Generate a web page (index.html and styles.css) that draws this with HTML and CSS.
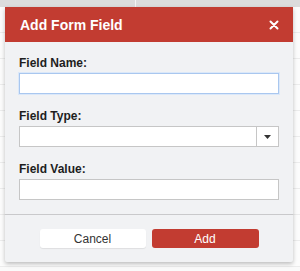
FILE: index.html
```
<!DOCTYPE html>
<html lang="en">
<head>
    <meta charset="UTF-8">
    <title>Add Form Field</title>
    <link rel="stylesheet" href="styles.css">
</head>
<body>
    <div class="table">
        <div class="table-head">
            <div class="th">Field</div>
            <div class="th th-value">Value</div>
        </div>
        <div class="row"></div>
        <div class="row"></div>
        <div class="row"></div>
        <div class="row"></div>
        <div class="row"></div>
        <div class="row"></div>
        <div class="row"></div>
        <div class="row"></div>
        <div class="row"></div>
        <div class="row"></div>
    </div>

    <div class="modal">
        <div class="modal-header">
            <span class="modal-title">Add Form Field</span>
            <span class="modal-close">
                <svg width="10" height="10" viewBox="0 0 10 10">
                    <path d="M1.5 1.5 L8.5 8.5 M8.5 1.5 L1.5 8.5" stroke="#fff" stroke-width="2" stroke-linecap="round"/>
                </svg>
            </span>
        </div>

        <div class="modal-body">
            <div class="field">
                <label class="label">Field Name:</label>
                <input class="input input-focus" type="text">
            </div>
            <div class="field">
                <label class="label">Field Type:</label>
                <div class="select">
                    <div class="select-value"></div>
                    <div class="select-arrow">
                        <svg width="7" height="4" viewBox="0 0 7 4"><path d="M0 0 H7 L3.5 4 Z" fill="#333"/></svg>
                    </div>
                </div>
            </div>
            <div class="field">
                <label class="label">Field Value:</label>
                <input class="input" type="text">
            </div>
        </div>

        <div class="modal-footer">
            <button class="btn btn-cancel">Cancel</button>
            <button class="btn btn-add">Add</button>
        </div>
    </div>
</body>
</html>
```

FILE: styles.css
```
body {
    margin: 0;
    font-family: "Liberation Sans", Arial, sans-serif;
    background-color: #fafafa;
    width: 300px;
    height: 271px;
    overflow: hidden;
    position: relative;
}
.table {
    width: 300px;
}
.table-head {
    display: flex;
    height: 17px;
    margin-top: -10px;
    background-color: #dcdcdc;
}
.th {
    width: 149px;
    border-right: 1px solid #f4f4f4;
    color: #a5a5a5;
    font-size: 13px;
    font-weight: bold;
    line-height: 12px;
}
.th-value {
    border-right: none;
    text-align: right;
    width: 180px;
}
.row {
    height: 25px;
    border-bottom: 1px solid #ececec;
    background-color: #fcfcfc;
}
.modal {
    position: absolute;
    top: 7px;
    left: 5px;
    width: 288px;
    background-color: #f1f2f4;
    border-radius: 0 0 2px 2px;
    box-shadow: 0 2px 4px rgba(0,0,0,0.25);
}
.modal-header {
    height: 35px;
    background-color: #c23c31;
    display: flex;
    align-items: center;
    justify-content: space-between;
    padding: 0 14px 0 15px;
}
.modal-title {
    color: #fff;
    font-size: 14px;
    font-weight: bold;
}
.modal-close {
    display: flex;
    margin-top: 1px;
}
.modal-body {
    padding: 14px;
    border-bottom: 1px solid #c9c9cb;
}
.field {
    margin-bottom: 15px;
}
.field:last-child {
    margin-bottom: 0;
}
.label {
    display: block;
    font-size: 12px;
    font-weight: bold;
    line-height: 14px;
    color: #1e1e1e;
    margin-bottom: 3px;
}
.input {
    display: block;
    box-sizing: border-box;
    width: 260px;
    height: 21px;
    margin: 0;
    border: 1px solid #c6c6c6;
    background: #fff;
    outline: none;
}
.input-focus {
    border-color: #a9c7ef;
    box-shadow: 0 0 0 1px #dbe8f9;
}
.select {
    display: flex;
    box-sizing: border-box;
    width: 260px;
    height: 21px;
    border: 1px solid #c6c6c6;
    background: #fff;
}
.select-value {
    flex: 1;
}
.select-arrow {
    width: 21px;
    border-left: 1px solid #c6c6c6;
    display: flex;
    align-items: center;
    justify-content: center;
}
.modal-footer {
    display: flex;
    justify-content: center;
    gap: 6px;
    padding: 14px 0;
}
.btn {
    height: 19px;
    border: none;
    border-radius: 3px;
    font-family: "Liberation Sans", Arial, sans-serif;
    font-size: 12px;
    padding: 0;
    cursor: pointer;
}
.btn-cancel {
    width: 106px;
    background: #fff;
    color: #333;
    box-shadow: 0 1px 1px rgba(0,0,0,0.08);
}
.btn-add {
    width: 107px;
    background: #c23c31;
    color: #fff;
}
```
